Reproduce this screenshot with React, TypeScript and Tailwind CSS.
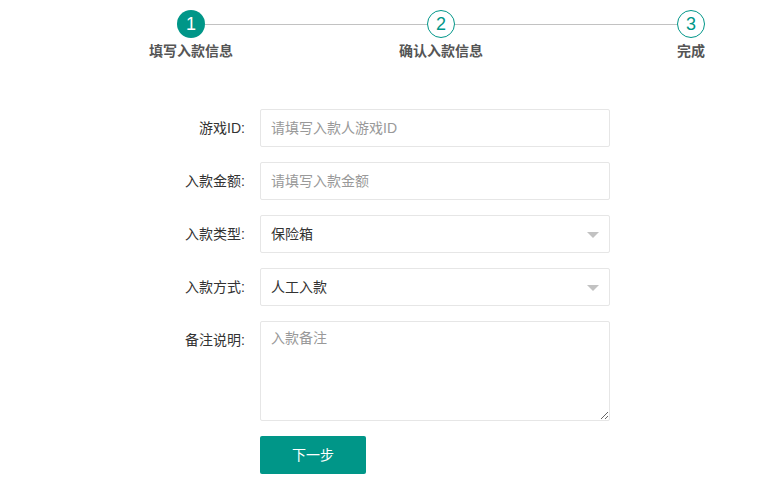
import React, { useState } from 'react';

const font = { fontFamily: '"Liberation Sans", "Noto Sans CJK SC", sans-serif' };

const Step: React.FC<{ num: number; label: string; active?: boolean }> = ({ num, label, active }) => (
    <div className="flex flex-col items-center w-7 shrink-0">
        <div
            className={
                active
                    ? 'w-7 h-7 rounded-full bg-[#009688] text-white flex items-center justify-center text-[18px] leading-none'
                    : 'w-7 h-7 rounded-full border border-[#009688] bg-white text-[#009688] flex items-center justify-center text-[18px] leading-none'
            }
        >
            {num}
        </div>
        <div className="mt-[3px] whitespace-nowrap text-[14px] leading-5 font-bold text-[#555]">{label}</div>
    </div>
);

const Row: React.FC<{ label: string; top?: boolean; children: React.ReactNode }> = ({ label, top, children }) => (
    <div className={top ? 'flex items-start mb-[15px]' : 'flex items-center mb-[15px]'}>
        <label className="w-[125px] pr-[15px] h-[38px] flex items-center justify-end text-[14px] text-[#333] whitespace-nowrap">
            {label}
        </label>
        {children}
    </div>
);

const inputCls =
    'w-[350px] h-[38px] border border-[#e6e6e6] rounded-[2px] px-[10px] text-[14px] text-[#333] bg-white outline-none placeholder:text-[#999]';

const SelectBox: React.FC<{ value: string }> = ({ value }) => (
    <div className="relative w-[350px] h-[38px] border border-[#e6e6e6] rounded-[2px] bg-white flex items-center px-[10px] text-[14px] text-[#333]">
        {value}
        <span className="absolute right-[10px] top-[16px] w-0 h-0 border-x-[6px] border-x-transparent border-t-[6px] border-t-[#c2c2c2]" />
    </div>
);

export default function App() {
    const [gameId, setGameId] = useState('');
    const [amount, setAmount] = useState('');
    const [note, setNote] = useState('');

    return (
        <div className="w-[778px] h-[485px] bg-white overflow-hidden" style={font}>
            <div className="pt-[10px] pl-[177px]">
                <div className="w-[528px] flex items-start">
                    <Step num={1} label="填写入款信息" active />
                    <div className="flex-1 h-px bg-[#c2c2c2] mt-[14px]" />
                    <Step num={2} label="确认入款信息" />
                    <div className="flex-1 h-px bg-[#c2c2c2] mt-[14px]" />
                    <Step num={3} label="完成" />
                </div>
            </div>

            <form className="mt-[48px] pl-[135px]" onSubmit={e => e.preventDefault()}>
                <Row label="游戏ID:">
                    <input
                        type="text"
                        value={gameId}
                        onChange={e => setGameId(e.target.value)}
                        placeholder="请填写入款人游戏ID"
                        className={inputCls}
                    />
                </Row>
                <Row label="入款金额:">
                    <input
                        type="text"
                        value={amount}
                        onChange={e => setAmount(e.target.value)}
                        placeholder="请填写入款金额"
                        className={inputCls}
                    />
                </Row>
                <Row label="入款类型:">
                    <SelectBox value="保险箱" />
                </Row>
                <Row label="入款方式:">
                    <SelectBox value="人工入款" />
                </Row>
                <Row label="备注说明:" top>
                    <textarea
                        value={note}
                        onChange={e => setNote(e.target.value)}
                        placeholder="入款备注"
                        className="w-[350px] h-[100px] border border-[#e6e6e6] rounded-[2px] px-[10px] py-[6px] leading-5 text-[14px] text-[#333] outline-none placeholder:text-[#999]"
                    />
                </Row>
                <div className="pl-[125px]">
                    <button
                        type="submit"
                        className="w-[106px] h-[38px] bg-[#009688] text-white text-[14px] rounded-[2px]"
                    >
                        下一步
                    </button>
                </div>
            </form>
        </div>
    );
}
